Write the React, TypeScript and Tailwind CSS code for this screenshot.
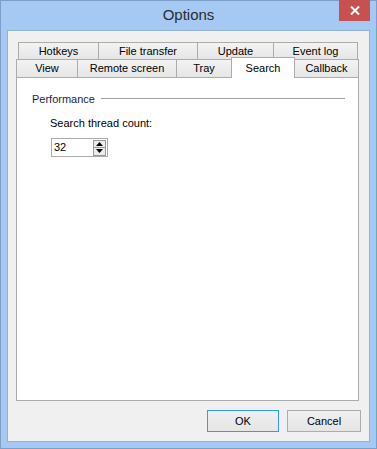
import React from "react";

const font = { fontFamily: '"Liberation Sans", Arial, sans-serif' };

const topRow = [
  { label: "Hotkeys", w: "w-[81px]" },
  { label: "File transfer", w: "w-[100px]" },
  { label: "Update", w: "w-[77px]" },
  { label: "Event log", w: "w-[85px]" },
];

function Tab({ label, w, first }: { label: string; w: string; first?: boolean }) {
  return (
    <div
      className={`${w} ${first ? "" : "-ml-px"} h-full flex items-center justify-center border-t border-l border-r border-[#acacac] bg-gradient-to-b from-[#f3f3f3] to-[#e6e6e6] text-[11px] text-black`}
    >
      {label}
    </div>
  );
}

export default function App() {
  return (
    <div
      className="w-[377px] h-[449px] bg-[#a5c9f2] border border-[#7d9ec6] flex flex-col select-none"
      style={font}
    >
      {/* Title bar */}
      <div className="relative h-[29px] flex items-center justify-center shrink-0">
        <span className="text-[15px] text-[#2b2b2b]">Options</span>
        <button className="absolute -top-px right-[6px] w-[31px] h-[21px] bg-[#c75050] flex items-center justify-center">
          <svg width="10" height="9" viewBox="0 0 10 9">
            <path d="M1 0.5 L9 8.5 M9 0.5 L1 8.5" stroke="white" strokeWidth="2" />
          </svg>
        </button>
      </div>

      {/* Client area */}
      <div className="flex-1 mx-[6px] mb-[6px] border border-[#8fb2dc] bg-[#f0f0f0] flex flex-col">
        <div className="pt-[11px] pl-[8px]">
          {/* Top tab row */}
          <div className="flex h-[17px] ml-[2px]">
            {topRow.map((t, i) => (
              <Tab key={t.label} label={t.label} w={t.w} first={i === 0} />
            ))}
          </div>
          {/* Bottom tab row */}
          <div className="flex h-[18px] items-end border-t border-[#acacac] w-[343px]">
            <div className="-mt-px h-[18px] flex">
              <Tab label="View" w="w-[62px]" first />
              <Tab label="Remote screen" w="w-[100px]" />
              <Tab label="Tray" w="w-[56px]" />
            </div>
            <div className="relative z-10 -ml-px -mb-px self-end h-[21px] w-[64px] bg-white border-t border-l border-r border-[#acacac] flex items-start justify-center pt-[2px] text-[11px] text-black">
              Search
            </div>
            <div className="-ml-px h-[18px] -mt-px">
              <Tab label="Callback" w="w-[65px]" first />
            </div>
          </div>

          {/* Panel */}
          <div className="w-[343px] h-[324px] bg-white border border-[#acacac] pl-[15px] pr-[13px] pt-[13px]">
            <div className="flex items-center h-[16px] text-[11px] text-[#1e1e3c]">
              <span>Performance</span>
              <div className="flex-1 ml-[6px] h-px bg-[#a0a0a0] -mt-[1px]" />
            </div>
            <div className="pl-[18px] mt-[8px]">
              <div className="text-[11px] text-black h-[16px] leading-[16px]">Search thread count:</div>
              <div className="mt-[7px] ml-px w-[57px] h-[19px] border border-[#acacac] flex items-center">
                <span className="pl-[2px] text-[11px] text-black flex-1">32</span>
                <div className="flex flex-col mr-[1px]">
                  <div className="w-[13px] h-[8px] border border-[#9a9a9a] bg-[#ececec] flex items-center justify-center">
                    <svg width="7" height="4" viewBox="0 0 7 4">
                      <path d="M3.5 0 L7 4 L0 4 Z" fill="black" />
                    </svg>
                  </div>
                  <div className="w-[13px] h-[8px] border border-t-0 border-[#9a9a9a] bg-[#ececec] flex items-center justify-center">
                    <svg width="7" height="4" viewBox="0 0 7 4">
                      <path d="M0 0 L7 0 L3.5 4 Z" fill="black" />
                    </svg>
                  </div>
                </div>
              </div>
            </div>
          </div>
        </div>

        {/* Buttons */}
        <div className="flex justify-end gap-[8px] mt-[9px] mr-[8px]">
          <button className="w-[72px] h-[22px] border border-[#3399ff] bg-gradient-to-b from-[#f0f0f0] to-[#e5e5e5] text-[11px] text-black">
            OK
          </button>
          <button className="w-[74px] h-[22px] border border-[#acacac] bg-gradient-to-b from-[#f0f0f0] to-[#e5e5e5] text-[11px] text-black">
            Cancel
          </button>
        </div>
      </div>
    </div>
  );
}
